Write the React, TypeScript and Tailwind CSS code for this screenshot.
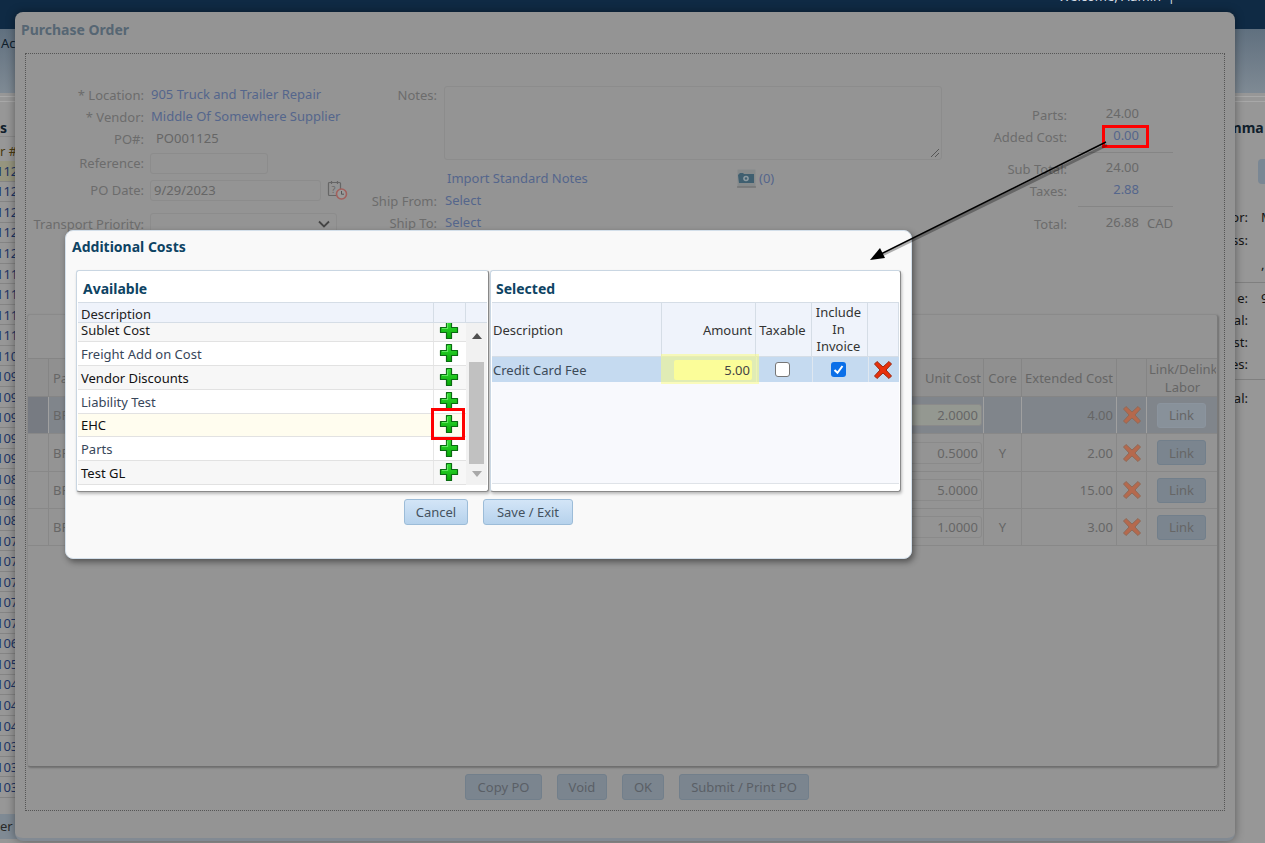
import React from "react";

const FONT = "[font-family:'Noto_Sans',Tahoma,sans-serif]";

function Plus() {
  return (
    <svg width="20" height="20" viewBox="0 0 20 20" className="shrink-0">
      <defs>
        <linearGradient id="pg" x1="0" y1="0" x2="0" y2="1">
          <stop offset="0" stopColor="#35e035" />
          <stop offset="1" stopColor="#07a807" />
        </linearGradient>
      </defs>
      <path d="M7.500 1.500h5v6h6v5h-6v6h-5v-6h-6v-5h6z" fill="url(#pg)" stroke="#0a6b12" strokeWidth="1.200" strokeLinejoin="round" />
      <path d="M8.500 3v5.500h-5.500" fill="none" stroke="#5fe85f" strokeWidth="1.200" />
    </svg>
  );
}

function Cross({ dim = false }: { dim?: boolean }) {
  return (
    <svg width="20" height="20" viewBox="0 0 20 20" className="shrink-0">
      <path
        d="M4 1.500 10 7l6-5.500 2.500 2.500L13 10l5.500 6-2.500 2.500L10 13l-6 5.500L1.500 16 7 10 1.500 4z"
        fill={dim ? "#b5694d" : "#e8300c"}
        stroke={dim ? "#8f6a58" : "#9a2a10"}
        strokeWidth="1"
        strokeLinejoin="round"
      />
    </svg>
  );
}

function CalendarIcon() {
  return (
    <svg width="21" height="21" viewBox="0 0 21 21" className="shrink-0">
      <rect x="1.500" y="2.500" width="12" height="13" rx="1" fill="none" stroke="#666" strokeWidth="1.200" />
      <path d="M4.500 1v3M10.500 1v3" stroke="#666" strokeWidth="1.200" />
      <text x="4.500" y="13" fontSize="9" fill="#666">?</text>
      <circle cx="14.500" cy="14" r="5" fill="#9a9a9a" stroke="#a2605c" strokeWidth="1.600" />
      <path d="M14.500 11v3.200h2.500" fill="none" stroke="#555" strokeWidth="1" />
    </svg>
  );
}

function CameraIcon() {
  return (
    <svg width="19" height="19" viewBox="0 0 19 19" className="shrink-0">
      <rect x="0.500" y="0.500" width="18" height="18" fill="#868a8b" />
      <path d="M1 6l2-2h3l1 1h10v9H2z" fill="#3f5f70" />
      <circle cx="9" cy="9.500" r="2.800" fill="#8d9aa0" />
      <circle cx="9" cy="9.500" r="1.200" fill="#3f5f70" />
      <path d="M0 18h19" stroke="#6a6a6a" />
    </svg>
  );
}

function Label({ w, children }: { w: string; children: React.ReactNode }) {
  return <div className={`${w} shrink-0 text-right text-[#6c6c6c]`}>{children}</div>;
}

function LeftRow({ h, label, children }: { h: string; label: string; children?: React.ReactNode }) {
  return (
    <div className={`flex ${h} items-center gap-[6px] whitespace-nowrap`}>
      <div className="w-[118px] shrink-0 text-right text-[#6c6c6c]">{label}</div>
      {children}
    </div>
  );
}

function CostRow({ label, value, blue, unit }: { label: string; value: string; blue?: boolean; unit?: string }) {
  return (
    <div className="flex h-[22px] items-center whitespace-nowrap">
      <div className="w-[87px] text-right text-[#6c6c6c]">{label}</div>
      <div className={`-mt-[4px] w-[72px] text-right ${blue ? "text-[#54668c]" : "text-[#696969]"}`}>{value}</div>
      {unit ? <div className="-mt-[2px] ml-[8px] text-[#696969]">{unit}</div> : null}
    </div>
  );
}

const LIST = [
  "112", "112", "112", "112", "112", "111", "111", "111", "111", "110", "109", "109", "109", "109", "109", "108",
  "108", "108", "107", "107", "107", "107", "107", "106", "105", "104", "104", "104", "103", "103", "103",
];

const PO_ROWS = [
  { unit: "2.0000", core: "", ext: "4.00", sel: true, h: "h-[37px]" },
  { unit: "0.5000", core: "Y", ext: "2.00", sel: false, h: "h-[38px]" },
  { unit: "5.0000", core: "", ext: "15.00", sel: false, h: "h-[37px]" },
  { unit: "1.0000", core: "Y", ext: "3.00", sel: false, h: "h-[37px]" },
];

const AVAILABLE = [
  { name: "Sublet Cost", bg: "bg-[#f7f7f7]", color: "text-[#1c1c1c]", h: "h-[19px]", pb: "pb-[4px]" },
  { name: "Freight Add on Cost", bg: "bg-white", color: "text-[#37465a]", h: "h-[24px]", pb: "" },
  { name: "Vendor Discounts", bg: "bg-[#f7f7f7]", color: "text-[#111]", h: "h-[24px]", pb: "" },
  { name: "Liability Test", bg: "bg-white", color: "text-[#37465a]", h: "h-[24px]", pb: "" },
  { name: "EHC", bg: "bg-[#fffdef]", color: "text-[#111]", h: "h-[23px]", pb: "" },
  { name: "Parts", bg: "bg-white", color: "text-[#37465a]", h: "h-[24px]", pb: "" },
  { name: "Test GL", bg: "bg-[#f7f7f7]", color: "text-[#111]", h: "h-[24px]", pb: "" },
];

export default function App() {
  return (
    <div className={`relative flex h-[843px] w-[1265px] flex-col overflow-hidden bg-[#979797] text-[13px] leading-[18px] ${FONT}`}>
      {/* page behind the dialogs */}
      <div className="flex h-[29px] shrink-0 justify-end overflow-hidden bg-[#0f2a44] pr-[90px]">
        <div className="-mt-[13px] whitespace-nowrap text-[#d5dce4]">Welcome, Admin &nbsp;|</div>
      </div>
      <div className="h-[64px] shrink-0 bg-gradient-to-b from-[#60707f] to-[#7f8a94] pl-[1px] pt-[5px] text-[#10202c]">Ac</div>
      <div className="flex min-h-0 flex-1">
        <div className="flex w-[40px] shrink-0 flex-col">
          <div className="mt-[3px] h-[6px] border-y border-[#a8a8a8]" />
          <div className="h-[23px] pt-[17px] text-[14px] font-bold text-[#10202c]">s</div>
          <div className="mt-[11px] h-[25px] border-t border-[#8a8a8a] pt-[5px] text-[#4a3a10]">r #</div>
          {LIST.map((n, i) => (
            <div
              key={i}
              className={`flex h-[20.55px] items-center border-b border-[#848484] text-[#1e3564] ${i === 0 ? "bg-[#96957f]" : "bg-[#979797]"}`}
            >
              <span className="-ml-[4px]">{n}</span>
            </div>
          ))}
          <div className="mt-[16px] h-[25px] bg-[#7f8a94] pt-[3px] text-[#2a2a2a]">er</div>
        </div>
        <div className="flex-1" />
        <div className="flex w-[65px] shrink-0 flex-col text-[#151515]">
          <div className="mt-[3px] h-[6px] border-y border-[#a8a8a8]" />
          <div className="mt-[17px] h-[18px] pl-[28px] text-[14px] font-bold text-[#10202c]">mma</div>
          <div className="mt-[22px] h-[25px] w-[7px] self-end rounded-l-[4px] bg-[#7a8794]" />
          <div className="mt-[22px] flex h-[22px] items-center"><span className="w-[48px] shrink-0 text-right">or:</span><span className="ml-[13px]">M</span></div>
          <div className="flex h-[23px] items-center"><span className="w-[48px] shrink-0 text-right">ss:</span></div>
          <div className="flex h-[25px] items-center"><span className="ml-[61px]">,</span></div>
          <div className="mt-[6px] border-t border-[#7f7f7f]" />
          <div className="mt-[4px] flex h-[22px] items-center"><span className="w-[48px] shrink-0 text-right">e:</span><span className="ml-[13px]">9</span></div>
          <div className="flex h-[22px] items-center"><span className="w-[48px] shrink-0 text-right">al:</span></div>
          <div className="flex h-[22px] items-center"><span className="w-[48px] shrink-0 text-right">st:</span></div>
          <div className="flex h-[22px] items-center"><span className="w-[48px] shrink-0 text-right">es:</span></div>
          <div className="mt-[4px] border-t border-[#7f7f7f]" />
          <div className="mt-[7px] flex h-[22px] items-center"><span className="w-[48px] shrink-0 text-right">al:</span></div>
        </div>
      </div>

      {/* Purchase Order dialog */}
      <div className="absolute left-[15px] top-[12px] flex h-[829px] w-[1220px] flex-col rounded-[8px] border-b-[3px] border-[#828a93] bg-[#949494] shadow-[0_0_10px_rgba(0,0,0,0.4)]">
        <div className="h-[41px] shrink-0 pl-[6px] pt-[9px] text-[14px] font-bold text-[#566673]">Purchase Order</div>
        <div className="mx-[10px] flex h-[758px] flex-col border border-dotted border-[#555]">
          <div className="flex h-[260px] shrink-0 pt-[30px]">
            {/* left form */}
            <div className="w-[314px] shrink-0">
              <LeftRow h="h-[22px]" label="* Location:">
                <span className="-mt-[3px] ml-[1px] text-[#54668c]">905 Truck and Trailer Repair</span>
              </LeftRow>
              <LeftRow h="h-[22px]" label="* Vendor:">
                <span className="-mt-[3px] ml-[1px] text-[#54668c]">Middle Of Somewhere Supplier</span>
              </LeftRow>
              <LeftRow h="h-[21px]" label="PO#:">
                <span className="-mt-[1px] ml-[6px] text-[#666]">PO001125</span>
              </LeftRow>
              <LeftRow h="h-[28px]" label="Reference:">
                <div className="h-[21px] w-[118px] shrink-0 rounded-[3px] border border-[#8c8c8c]" />
              </LeftRow>
              <LeftRow h="h-[26px]" label="PO Date:">
                <div className="flex h-[21px] w-[171px] shrink-0 items-center rounded-[3px] border border-[#8c8c8c] pl-[3px] text-[#666]">9/29/2023</div>
                <CalendarIcon />
              </LeftRow>
              <LeftRow h="h-[42px]" label="Transport Priority:">
                <div className="flex h-[22px] w-[187px] shrink-0 items-center justify-end rounded-[3px] border border-[#8c8c8c] pr-[6px]">
                  <svg width="12" height="8" viewBox="0 0 12 8"><path d="M1 1.500l5 5 5-5" fill="none" stroke="#444" strokeWidth="1.800" /></svg>
                </div>
              </LeftRow>
            </div>
            {/* notes */}
            <div className="mt-[2px] w-[640px] shrink-0">
              <div className="flex">
                <Label w="w-[97px]">Notes:</Label>
                <div className="relative ml-[7px] h-[74px] w-[498px] rounded-[3px] border border-[#8c8c8c]">
                  <svg width="10" height="10" viewBox="0 0 10 10" className="absolute bottom-[1px] right-[1px]">
                    <path d="M1 9l8-8M5 9l4-4" stroke="#555" strokeWidth="1" />
                  </svg>
                </div>
              </div>
              <div className="mt-[9px] flex h-[18px] items-center">
                <span className="ml-[107px] w-[290px] text-[#54668c]">Import Standard Notes</span>
                <CameraIcon />
                <span className="ml-[3px] text-[#54668c]">(0)</span>
              </div>
              <div className="mt-[3px] flex h-[22px] items-center">
                <Label w="w-[97px]">Ship From:</Label>
                <span className="-mt-[2px] ml-[8px] text-[#54668c]">Select</span>
              </div>
              <div className="flex h-[22px] items-center">
                <Label w="w-[97px]">Ship To:</Label>
                <span className="-mt-[2px] ml-[8px] text-[#54668c]">Select</span>
              </div>
            </div>
            {/* totals */}
            <div className="mt-[20px] w-[200px] shrink-0">
              <CostRow label="Parts:" value="24.00" />
              <CostRow label="Added Cost:" value="0.00" blue />
              <div className="mb-[5px] ml-[98px] h-[5px] w-[95px] border-b border-[#858585]" />
              <CostRow label="Sub Total:" value="24.00" />
              <CostRow label="Taxes:" value="2.88" blue />
              <div className="mb-[6px] ml-[98px] h-[5px] w-[95px] border-b border-[#858585]" />
              <CostRow label="Total:" value="26.88" unit="CAD" />
            </div>
          </div>

          {/* parts panel */}
          <div className="ml-[1px] mr-[6px] flex h-[453px] shrink-0 flex-col rounded-[3px] border border-[#8a8a8a] border-b-[#6f6f6f] border-r-[#7a7a7a] shadow-[1px_1px_2px_rgba(0,0,0,0.25)]">
            <div className="h-[43px] shrink-0" />
            <div className="grid h-[39px] shrink-0 grid-cols-[21px_935px_38px_95px_30px_69px] border-y border-[#858585] bg-[#909090] text-[#666]">
              <div className="border-r border-[#858585]" />
              <div className="flex items-center border-r border-[#858585]">
                <span className="pl-[4px]">Pa</span>
                <span className="ml-auto pr-[2px]">Unit Cost</span>
              </div>
              <div className="flex items-center justify-center border-r border-[#858585]">Core</div>
              <div className="flex items-center justify-center border-r border-[#858585]">Extended Cost</div>
              <div className="border-r border-[#858585]" />
              <div className="overflow-hidden whitespace-nowrap pl-[2px] pt-[1px] text-center">Link/Delink<br />Labor</div>
            </div>
            {PO_ROWS.map((r, i) => (
              <div
                key={i}
                className={`grid ${r.h} shrink-0 grid-cols-[21px_935px_38px_95px_30px_69px] border-b border-[#888] ${r.sel ? "bg-[#80858b]" : ""} text-[#666]`}
              >
                <div className={`border-r ${r.sel ? "border-[#a0a0a0] bg-[#777b82]" : "border-[#888]"}`} />
                <div className={`flex items-center border-r ${r.sel ? "border-[#a0a0a0]" : "border-[#888]"}`}>
                  <span className="pl-[4px]">BR</span>
                  <div className={`ml-auto mr-[1px] flex h-[22px] w-[120px] items-center justify-end rounded-[3px] border border-[#8a8a8a] pr-[3px] ${r.sel ? "bg-[#949891]" : ""}`}>{r.unit}</div>
                </div>
                <div className={`flex items-center justify-center border-r ${r.sel ? "border-[#a0a0a0]" : "border-[#888]"}`}>{r.core}</div>
                <div className={`flex items-center justify-end border-r pr-[3px] ${r.sel ? "border-[#a0a0a0]" : "border-[#888]"}`}>{r.ext}</div>
                <div className={`flex items-center justify-center border-r ${r.sel ? "border-[#a0a0a0]" : "border-[#888]"}`}><Cross dim /></div>
                <div className="flex items-center justify-center">
                  <div className={`flex h-[25px] w-[49px] items-center justify-center rounded-[3px] border ${r.sel ? "border-[#8b949e] bg-[#88919a]" : "border-[#727f8b] bg-[#7b858f]"}`}>Link</div>
                </div>
              </div>
            ))}
          </div>

          {/* footer buttons */}
          <div className="mt-[7px] flex justify-center gap-[15px] pl-[24px] text-[#5a5f66]">
            <div className="flex h-[26px] w-[77px] items-center justify-center rounded-[3px] border border-[#727f8b] bg-[#7b858f]">Copy PO</div>
            <div className="flex h-[26px] w-[50px] items-center justify-center rounded-[3px] border border-[#727f8b] bg-[#7b858f]">Void</div>
            <div className="flex h-[26px] w-[42px] items-center justify-center rounded-[3px] border border-[#727f8b] bg-[#7b858f]">OK</div>
            <div className="flex h-[26px] w-[130px] items-center justify-center rounded-[3px] border border-[#727f8b] bg-[#7b858f]">Submit / Print PO</div>
          </div>
        </div>
      </div>

      {/* Additional Costs dialog */}
      <div className="absolute left-[65px] top-[230px] flex h-[329px] w-[847px] flex-col rounded-[8px] border border-[#d3dfea] bg-[#f9f9f9] shadow-[2px_3px_6px_rgba(0,0,0,0.45)]">
        <div className="h-[39px] shrink-0 pl-[6px] pt-[7px] text-[14px] font-bold text-[#0d4363]">Additional Costs</div>
        <div className="ml-[10px] flex h-[222px] shrink-0 gap-[1px]">
          {/* available */}
          <div className="flex w-[413px] shrink-0 flex-col rounded-[3px] border border-[#c9d6e2] border-b-[#8a8a8a] border-r-[#8a8a8a] bg-white shadow-[1px_2px_3px_rgba(0,0,0,0.25)]">
            <div className="h-[31px] shrink-0 pl-[6px] pt-[9px] text-[14px] font-bold text-[#0d4363]">Available</div>
            <div className="mx-[1px] flex h-[21px] shrink-0 border-y border-[#d5dde6] bg-[#eff3fb] text-[#222]">
              <div className="w-[355px] pl-[3px] pt-[2px]">Description</div>
              <div className="w-[32px] border-l border-[#d5dde6]" />
              <div className="flex-1 border-l border-[#d5dde6]" />
            </div>
            <div className="mx-[1px] flex">
              <div className="w-[388px] shrink-0">
                {AVAILABLE.map((a) => (
                  <div key={a.name} className={`flex ${a.h} overflow-hidden border-b border-[#e2e2e2] ${a.bg}`}>
                    <div className={`flex w-[355px] items-center pl-[3px] ${a.pb} ${a.color}`}>{a.name}</div>
                    <div className={`flex w-[33px] items-center justify-center border-l border-[#e6e6e6] pr-[3px] ${a.pb || "pb-[2px]"}`}><Plus /></div>
                  </div>
                ))}
              </div>
              <div className="flex flex-1 flex-col items-center bg-[#f1f1f1] px-[3px]">
                <div className="flex h-[39px] w-full items-center justify-center pb-[18px] pt-[4px]">
                  <div className="h-0 w-0 border-x-[5px] border-b-[6px] border-x-transparent border-b-[#505050]" />
                </div>
                <div className="h-[102px] w-full bg-[#c1c1c1]" />
                <div className="flex h-[20px] w-full items-center justify-center">
                  <div className="h-0 w-0 border-x-[5px] border-t-[6px] border-x-transparent border-t-[#a8a8a8]" />
                </div>
              </div>
            </div>
          </div>
          {/* selected */}
          <div className="flex w-[411px] shrink-0 flex-col rounded-[3px] border border-[#c9d6e2] border-b-[#8a8a8a] border-r-[#8a8a8a] bg-white shadow-[1px_2px_3px_rgba(0,0,0,0.25)]">
            <div className="h-[31px] shrink-0 pl-[5px] pt-[9px] text-[14px] font-bold text-[#0d4363]">Selected</div>
            <div className="mx-[1px] grid h-[55px] shrink-0 grid-cols-[170px_94px_56px_56px_31px] border-y border-[#d5dde6] bg-[#eff3fb] text-[#333] [&>div]:border-r [&>div]:border-[#d5dde6]">
              <div className="flex items-center pl-[1px]">Description</div>
              <div className="flex items-center justify-end pr-[3px]">Amount</div>
              <div className="flex items-center justify-center pr-[2px]">Taxable</div>
              <div className="flex items-center justify-center pr-[2px] text-center leading-[17px]">Include<br />In<br />Invoice</div>
              <div />
            </div>
            <div className="mx-[1px] flex h-[127px] shrink-0 flex-col border-b border-[#dfe3e8] bg-[#f8f9fd]">
              <div className="grid h-[25px] grid-cols-[170px_94px_56px_56px_31px] bg-[#c5daf0] text-[#3c4a58]">
                <div className="flex items-center pl-[1px]">Credit Card Fee</div>
                <div className="relative flex items-center justify-end">
                  <div className="absolute -bottom-[2px] -left-[1px] -right-[3px] -top-[3px] bg-[#fbfd7a]/50" />
                  <div className="relative mr-[4px] flex h-[20px] w-[78px] items-center justify-end rounded-[2px] bg-[#fbfd99] pr-[2px] text-[#444]">5.00</div>
                </div>
                <div className="flex items-center justify-center border-l border-[#dfe7f0] pr-[4px]">
                  <div className="-mt-[1px] h-[15px] w-[15px] rounded-[3px] border border-[#767676] bg-white" />
                </div>
                <div className="flex items-center justify-center border-l border-[#dfe7f0] pr-[4px]">
                  <div className="-mt-[1px] flex h-[15px] w-[15px] items-center justify-center rounded-[3px] bg-[#0b6fe8]">
                    <svg width="11" height="11" viewBox="0 0 11 11"><path d="M1.500 6l3 2.800L9.500 2" fill="none" stroke="#fff" strokeWidth="2" /></svg>
                  </div>
                </div>
                <div className="flex items-center justify-center border-l border-[#dfe7f0] pr-[3px]"><Cross /></div>
              </div>
            </div>
          </div>
        </div>
        <div className="mt-[7px] flex justify-center gap-[15px] text-[#44525f]">
          <div className="flex h-[26px] w-[64px] items-center justify-center rounded-[3px] border border-[#9cbcd8] bg-gradient-to-b from-[#d3e5f7] to-[#b6d2ec]">Cancel</div>
          <div className="flex h-[26px] w-[90px] items-center justify-center rounded-[3px] border border-[#9cbcd8] bg-gradient-to-b from-[#d3e5f7] to-[#b6d2ec]">Save / Exit</div>
        </div>
      </div>

      {/* annotations over the picture */}
      <div className="absolute left-[431px] top-[408px] h-[32px] w-[34px] border-[3px] border-[#fe0000]" />
      <div className="absolute left-[1102px] top-[125px] h-[23px] w-[47px] border-[3px] border-[#fe0000]" />
      <svg width="1265" height="843" viewBox="0 0 1265 843" className="pointer-events-none absolute left-0 top-0">
        <path d="M1107 145 L878 257" stroke="#000" strokeOpacity="0.3" strokeWidth="3" />
        <path d="M1106 142 L877 256" stroke="#000" strokeWidth="1.500" />
        <path d="M870 260 L885 258 L880 248 Z" fill="#000" />
      </svg>
    </div>
  );
}
